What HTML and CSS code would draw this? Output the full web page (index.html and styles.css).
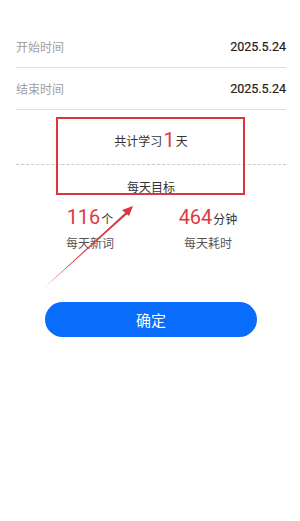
FILE: index.html
```html
<!DOCTYPE html>
<html lang="zh-CN">
  <head>
    <meta charset="UTF-8" />
    <meta name="viewport" content="width=device-width, initial-scale=1.0" />
    <title>学习计划</title>
    <link rel="stylesheet" href="styles.css">
  </head>
  <body>
    <div class="page">
      <div class="date-row">
        <span class="date-label">开始时间</span>
        <span class="date-value">2025.5.24</span>
      </div>
      <div class="date-row">
        <span class="date-label">结束时间</span>
        <span class="date-value">2025.5.24</span>
      </div>

      <div class="total-row">共计学习<span class="total-num">1</span>天</div>
      <div class="goal-title">每天目标</div>

      <div class="stats">
        <div class="stat">
          <div class="stat-value"><span class="stat-num">116</span>个</div>
          <div class="stat-label">每天新词</div>
        </div>
        <div class="stat">
          <div class="stat-value"><span class="stat-num">464</span>分钟</div>
          <div class="stat-label">每天耗时</div>
        </div>
      </div>

      <button class="confirm-btn">确定</button>

      <!-- 标注 -->
      <div class="mark-box"></div>
      <svg class="mark-arrow" width="300" height="521" viewBox="0 0 300 521">
        <polygon points="44,288 126,212 127.5,213.8" fill="#d9363e" />
        <polygon points="133,206 122,210 129,216" fill="#d9363e" />
      </svg>
    </div>
  </body>
</html>
```

FILE: styles.css
```css
body {
  margin: 0px;
  background-color: #ffffff;
  font-family: "Noto Sans CJK SC", "Noto Sans", sans-serif;
}

.page {
  position: relative;
  width: 300px;
  height: 521px;
  padding: 26px 14px 0 16px;
  box-sizing: border-box;
}

.date-row {
  display: flex;
  justify-content: space-between;
  align-items: center;
  height: 42px;
  border-bottom: 1px solid #dddddd;
  box-sizing: border-box;
}

.date-label {
  font-size: 12px;
  color: #a0a0a0;
}

.date-value {
  font-family: Roboto, "Noto Sans", sans-serif;
  font-size: 12.5px;
  color: #222222;
  -webkit-text-stroke: 0.2px #222222;
}

.total-row {
  display: flex;
  justify-content: center;
  align-items: center;
  height: 55px;
  padding-top: 6px;
  box-sizing: border-box;
  border-bottom: 1px dashed #cccccc;
  font-size: 12px;
  color: #333333;
}

.total-num {
  font-family: Roboto, "Noto Sans", sans-serif;
  font-size: 20px;
  color: #e0393e;
  margin: 0 1px;
}

.goal-title {
  text-align: center;
  font-size: 12px;
  color: #333333;
  padding-top: 14px;
  line-height: 16px;
}

.stats {
  display: flex;
  justify-content: center;
  gap: 18px;
  margin-top: 10px;
  padding-right: 4px;
}

.stat {
  width: 100px;
  display: flex;
  flex-direction: column;
  align-items: center;
}

.stat-value {
  font-size: 12px;
  color: #333333;
  line-height: 24px;
}

.stat-num {
  font-family: Roboto, "Noto Sans", sans-serif;
  font-size: 20px;
  color: #e0393e;
  margin-right: 1px;
}

.stat-label {
  font-size: 12px;
  color: #555555;
  margin-top: 4px;
  line-height: 16px;
}

.confirm-btn {
  display: block;
  width: 212px;
  height: 35px;
  margin: 51px 0 0 29px;
  border: none;
  border-radius: 18px;
  background-color: #0a6cfb;
  color: #ffffff;
  font-family: "Noto Sans CJK SC", sans-serif;
  font-size: 15px;
}

.mark-box {
  position: absolute;
  left: 56px;
  top: 117px;
  width: 189px;
  height: 78px;
  border: 2px solid #d9363e;
  box-sizing: border-box;
}

.mark-arrow {
  position: absolute;
  left: 0;
  top: 0;
}
```
